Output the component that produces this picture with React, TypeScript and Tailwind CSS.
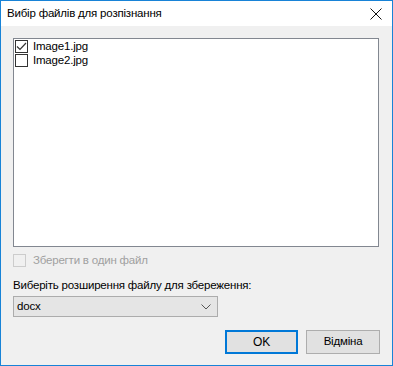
const files = [
  { name: 'Image1.jpg', checked: true },
  { name: 'Image2.jpg', checked: false },
];

function CheckBox({ checked, disabled }: { checked?: boolean; disabled?: boolean }) {
  return (
    <div
      className={`w-[13px] h-[13px] border flex items-center justify-center shrink-0 ${
        disabled ? 'border-[#cccccc] bg-[#f0f0f0]' : 'border-[#333333] bg-white'
      }`}
    >
      {checked && (
        <svg width="11" height="11" viewBox="0 0 11 11">
          <path d="M1 5.5 L4 8.5 L10 2" fill="none" stroke="#333333" strokeWidth="1.2" />
        </svg>
      )}
    </div>
  );
}

export default function App() {
  return (
    <div
      className="w-[393px] h-[366px] border border-[#1883d7] bg-[#f0f0f0] flex flex-col text-[11.5px] tracking-[-0.2px] text-black"
      style={{ fontFamily: '"Liberation Sans", Arial, sans-serif' }}
    >
      <div className="h-[25px] bg-white flex items-center justify-between pl-[6px] pr-[10px] shrink-0">
        <span className="text-[11.5px]">Вибір файлів для розпізнання</span>
        <svg width="12" height="12" viewBox="0 0 12 12">
          <path d="M0.5 0.5 L11.5 11.5 M11.5 0.5 L0.5 11.5" stroke="#111111" strokeWidth="1" />
        </svg>
      </div>

      <div className="flex flex-col pl-[12px]">
        <div className="mt-[12px] w-[366px] h-[209px] border border-[#828790] bg-white pl-[1px]">
          {files.map((f) => (
            <div key={f.name} className="h-[14px] flex items-center gap-[5px]">
              <CheckBox checked={f.checked} />
              <span className="leading-[14px]">{f.name}</span>
            </div>
          ))}
        </div>

        <div className="mt-[6px] h-[14px] flex items-center gap-[7px]">
          <CheckBox disabled />
          <span className="text-[#a0a0a0] leading-[14px]">Зберегти в один файл</span>
        </div>

        <div className="mt-[11px] h-[14px] leading-[14px]">Виберіть розширення файлу для збереження:</div>

        <div className="mt-[4px] w-[205px] h-[21px] border border-[#acacac] bg-[#e5e5e5] flex items-center justify-between pl-[3px] pr-[6px]">
          <span>docx</span>
          <svg width="10" height="6" viewBox="0 0 10 6">
            <path d="M0.5 0.5 L5 5 L9.5 0.5" fill="none" stroke="#555555" strokeWidth="1" />
          </svg>
        </div>

        <div className="mt-[13px] flex justify-end gap-[8px] pr-[12px]">
          <button className="w-[73px] h-[24px] border-2 border-[#0078d7] bg-[#e1e1e1] text-[12px]">OK</button>
          <button className="w-[74px] h-[24px] border border-[#adadad] bg-[#e1e1e1]">Відміна</button>
        </div>
      </div>
    </div>
  );
}
